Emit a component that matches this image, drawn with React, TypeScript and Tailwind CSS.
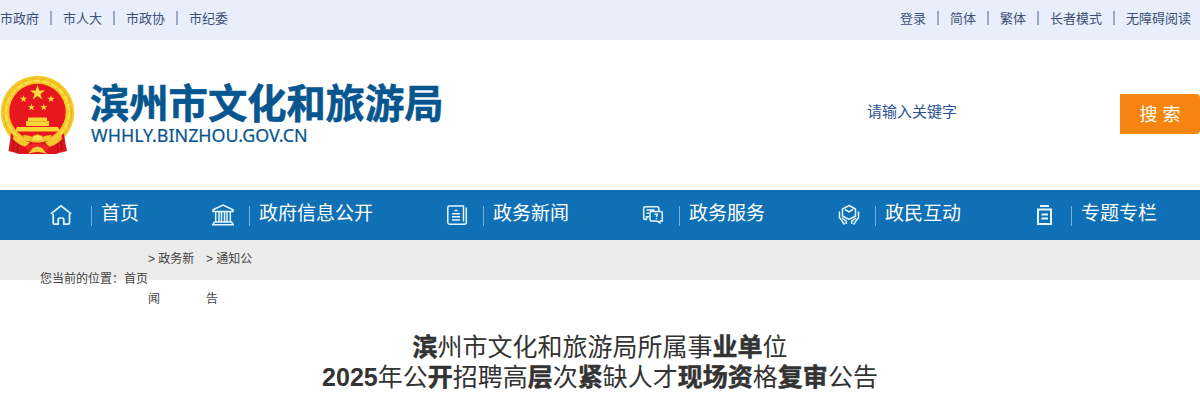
import type { ReactNode } from "react";

const leftLinks = ["市政府", "市人大", "市政协", "市纪委"];
const rightLinks = ["登录", "简体", "繁体", "长者模式", "无障碍阅读"];

const STAR = "M0,-1 L.225,-.309 L.951,-.309 L.363,.118 L.588,.809 L0,.382 L-.588,.809 L-.363,.118 L-.951,-.309 L-.225,-.309 Z";

function Emblem() {
  const stars = [
    { x: 37.5, y: 18, r: 8 },
    { x: 23.5, y: 24, r: 3.8 },
    { x: 51, y: 24, r: 3.8 },
    { x: 31.5, y: 32.3, r: 3.8 },
    { x: 43.8, y: 32.3, r: 3.8 },
  ];
  return (
    <svg className="block h-20 w-[75px] shrink-0" viewBox="0 0 75 80">
      <circle cx="37.5" cy="37.5" r="36.7" fill="#f3c928" />
      <circle cx="37.5" cy="37.5" r="34" fill="none" stroke="#dfac20" strokeWidth=".8" strokeDasharray="6 3" />
      <circle cx="37.5" cy="37.5" r="31.5" fill="none" stroke="#fbdf4b" strokeWidth="2" strokeDasharray="7 2" />
      <circle cx="37.5" cy="37" r="28.2" fill="#e8171f" />
      {stars.map((s) => (
        <path key={s.x} d={STAR} fill="#fbdc3a" transform={`translate(${s.x} ${s.y}) scale(${s.r})`} />
      ))}
      <path d="M28 42.500 H47 V46 H49 V51 H26 V46 H28 Z M17 52 H58 L60 56.500 H15 Z" fill="#f8d636" />
      <path d="M28 46.500 H47" stroke="#dba024" strokeWidth=".7" />
      {/* ribbon */}
      <path d="M11 58 Q17 66 28 66 L47 66 Q58 66 64 58 L65 66 L67 76 L59 78 L56 79 H19 L16 78 L8.5 76 L10 66 Z" fill="#dc151d" />
      <path d="M14 65 L13 76 M18 68 L17 77 M61 65 L62 76 M57 68 L58 77" stroke="#ae0d17" strokeWidth="1.1" />
      <path d="M23 60 Q30 60 34 63 L37.500 60 L41 63 Q45 60 52 60 Q48 67 41 67.500 H34 Q27 67 23 60 Z" fill="#f3c72d" />
      <path d="M14 59 Q22 65 30 67 L26 72 Q17 69 13 64 Z M61 59 Q53 65 45 67 L49 72 Q58 69 62 64 Z" fill="#f3c72d" />
      <path d="M31 66 L33 61 L37.500 59.500 L42 61 L44 66 Z" fill="#fbe14d" stroke="#dd9d20" strokeWidth=".7" />
      <path d="M25 71 Q37.500 66 50 71 L47 76 H28 Z" fill="#ef2528" />
      <path d="M28 79 L33 73 L37.500 71.500 L42 73 L47 79 Q37.500 75 28 79 Z" fill="#f6cf35" />
    </svg>
  );
}

function NavIcon({ children }: { children: ReactNode }) {
  return (
    <svg className="mt-3.5 h-[22px] w-[22px] shrink-0" viewBox="0 0 22 22" fill="none" stroke="#e6f7ff" strokeWidth="1.7">
      {children}
    </svg>
  );
}

const navItems = [
  {
    label: "首页",
    divider: "ml-[19px]",
    icon: <path d="M.8 9.800 L11 1.800 L21.200 9.800 M3.200 10 V19 Q3.200 20.200 4.400 20.200 H8.200 V15.500 Q8.200 14 9.700 14 H12.300 Q13.800 14 13.800 15.500 V20.200 H18 Q19.500 20.200 19.500 19 V10" />,
  },
  {
    label: "政府信息公开",
    divider: "ml-[15px]",
    icon: <path d="M1 7.500 V5.800 L11 1 L21 5.800 V7.500 Z M3.700 8 V18 M7 8 V18 M9.500 8 V18 M12.500 8 V18 M15 8 V18 M18.300 8 V18 M2.500 18 H19.500 L21.300 20.800 H.7 L2.500 18" strokeWidth="1.5" />,
  },
  {
    label: "政务新闻",
    divider: "ml-[15px]",
    icon: <path d="M17.500 17.500 V2 H3.200 Q1.800 2 1.800 3.400 V18.500 Q1.800 20.200 3.500 20.200 H18.500 Q20.300 20.200 20.300 18.500 V3.500 M8.500 6.500 H11.500 M6 9.700 H14 M6 12.700 H14 M6 16 H14" strokeWidth="1.5" />,
  },
  {
    label: "政务服务",
    divider: "ml-[15px]",
    icon: (
      <>
        <path d="M5 15.500 H3 Q1.700 15.500 1.700 14.200 V4 Q1.700 2.700 3 2.700 H15.500 Q16.800 2.700 16.800 4 V7 M4.500 6 H12.500 M4.500 9.200 H7 M4.500 15.500 V12.800 H7 M18 17 V18.700 L15 17 H9.500 Q8 17 8 15.500 V9 Q8 7.500 9.500 7.500 H19 Q20.300 7.500 20.300 9 V17 H18" strokeWidth="1.5" />
        <path d="M12.500 10.800 Q13.500 9.500 15 10 Q16 10.800 14.500 12 V13 M14.500 14 V15.200" strokeWidth="1.4" />
      </>
    ),
  },
  {
    label: "政民互动",
    divider: "ml-[15px]",
    icon: <path d="M11 1.500 L17.500 5 V12 L11 15.500 L4.500 12 V5 Z M7 5.500 L11 7.800 L15 5.500 M1.500 7.500 V13.500 L6.500 20.500 M4 14 L8.300 17.200 V20 M20.500 7.500 V13.500 L15.500 20.500 M18 14 L13.700 17.200 V20" strokeWidth="1.5" />,
  },
  {
    label: "专题专栏",
    divider: "ml-[15px]",
    icon: <path d="M6 2 H15 M4 5.500 H17 V20 H4 Z M7.500 10.500 H14 M7.500 14.500 H14" strokeWidth="2" />,
  },
];

function TopLinks({ links }: { links: string[] }) {
  return (
    <div className="flex items-center">
      {links.map((link, i) => (
        <div key={link} className="flex items-center">
          {i > 0 && <span className="mx-[11px] mb-0.5 h-3.5 w-0.5 bg-[#9caac6]" />}
          <a>{link}</a>
        </div>
      ))}
    </div>
  );
}

function B({ children }: { children: ReactNode }) {
  return <b className="font-bold [-webkit-text-stroke:0.5px_#333]">{children}</b>;
}

export default function App() {
  return (
    <div className="h-[400px] w-[1200px] overflow-hidden bg-white font-['Liberation_Sans','Noto_Sans_CJK_SC',sans-serif] text-[#333]">
      <div className="flex h-10 justify-between bg-[#e8eefa] pr-[9px] pb-0.5 text-[13px] text-[#3c5078]">
        <TopLinks links={leftLinks} />
        <TopLinks links={rightLinks} />
      </div>

      <header className="flex h-[150px] items-start">
        <div className="flex pt-[35px]">
          <Emblem />
          <div className="ml-[15px] text-[#07568f]">
            <div className="mt-[9px] h-[41px] text-[39.3px] leading-[41px] font-bold whitespace-nowrap [-webkit-text-stroke:0.6px_#07568f]">滨州市文化和旅游局</div>
            <div className="ml-px h-5 font-['Noto_Sans',sans-serif] text-[17.9px] leading-5 [-webkit-text-stroke:0.2px_#07568f]">WHHLY.BINZHOU.GOV.CN</div>
          </div>
        </div>
        <div className="mt-[54px] ml-auto flex h-10 w-[333px] justify-between">
          <span className="text-[15px] leading-9 text-[#2b5394]">请输入关键字</span>
          <button className="h-10 w-20 rounded-r-[4px] bg-[#f58410] pt-px text-lg leading-10 text-white">搜 索</button>
        </div>
      </header>

      <nav className="flex h-[50px] gap-[73px] bg-[#0f70b5] pl-[50px] text-[19px] text-white">
        {navItems.map((item) => (
          <a key={item.label} className="flex">
            <NavIcon>{item.icon}</NavIcon>
            <span className={`mt-4 h-5 w-px bg-[#6fb2df] ${item.divider}`} />
            <span className="ml-[9px] leading-[48px] whitespace-nowrap">{item.label}</span>
          </a>
        ))}
      </nav>

      <div className="flex h-10 items-start bg-[#ececec] pl-10 text-xs text-[#444]">
        <span className="pt-[29px] leading-5">您当前的位置：首页</span>
        <span className="-mt-px w-[58px] leading-10">&gt; 政务新<br />闻</span>
        <span className="-mt-px leading-10">&gt; 通知公<br />告</span>
      </div>

      <h1 className="mt-[52px] text-center text-[25px] leading-[30px]">
        <B>滨</B>州市文化和旅游局所属事<B>业单</B>位
        <br />
        <b className="font-bold">2025</b>年公<B>开</B>招聘高<B>层</B>次<B>紧</B>缺人才<B>现场资</B>格<B>复审</B>公告
      </h1>
    </div>
  );
}
